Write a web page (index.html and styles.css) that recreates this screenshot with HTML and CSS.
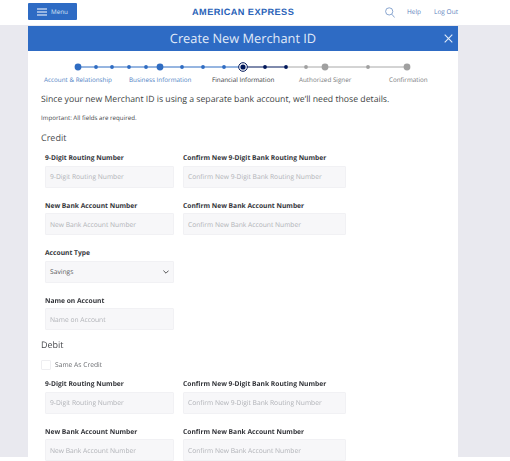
FILE: index.html
```html
<!DOCTYPE html>
<html lang="en">
<head>
<meta charset="utf-8">
<title>Create New Merchant ID</title>
<link rel="stylesheet" href="styles.css">
</head>
<body>
<header class="topbar">
  <button class="menu-btn" type="button">
    <svg class="menu-icon" width="10" height="8" viewBox="0 0 10 8"><path d="M0 1h10M0 4h10M0 7h10" stroke="#fff" stroke-width="1.2"/></svg>
    <span>Menu</span>
  </button>
  <div class="logo">AMERICAN EXPRESS</div>
  <nav class="top-links">
    <svg class="search-icon" width="10" height="11" viewBox="0 0 10 11"><circle cx="4.2" cy="4.4" r="3.6" fill="none" stroke="#6d90c4" stroke-width="0.8"/><path d="M6.8 7.2l2.8 3.3" stroke="#6d90c4" stroke-width="0.8"/></svg>
    <a class="help">Help</a>
    <a>Log Out</a>
  </nav>
</header>
<div class="page">
  <main class="panel">
    <div class="title-bar">
      <h1>Create New Merchant ID</h1>
      <svg class="close-icon" width="9" height="9" viewBox="0 0 9 9"><path d="M.7.7l7.6 7.6M8.3.7L.7 8.3" stroke="#e3edf9" stroke-width="1.1"/></svg>
    </div>
    <svg class="stepper" width="430" height="14" viewBox="0 0 430 14">
      <path d="M50 7H215" stroke="#2f6cc2" stroke-width="1"/>
      <path d="M215 7H258" stroke="#00175a" stroke-width="1"/>
      <path d="M258 7H379" stroke="#a8a8a8" stroke-width="1"/>
      <g fill="#2f6cc2">
        <circle cx="50" cy="7" r="3.4"/><circle cx="68" cy="7" r="1.9"/><circle cx="84" cy="7" r="1.9"/><circle cx="101" cy="7" r="1.9"/><circle cx="118" cy="7" r="1.9"/><circle cx="132" cy="7" r="3.4"/><circle cx="154" cy="7" r="1.9"/><circle cx="175" cy="7" r="1.9"/><circle cx="196" cy="7" r="1.9"/>
      </g>
      <circle cx="215" cy="7" r="4.3" fill="#fff" stroke="#00175a" stroke-width="1"/>
      <circle cx="215" cy="7" r="2.6" fill="#00175a"/>
      <g fill="#00175a"><circle cx="237" cy="7" r="1.9"/><circle cx="258" cy="7" r="1.9"/></g>
      <g fill="#a0a0a0"><circle cx="278" cy="7" r="1.9"/><circle cx="297" cy="7" r="3.4"/><circle cx="340" cy="7" r="1.9"/><circle cx="379" cy="7" r="3.4"/></g>
    </svg>
    <ol class="step-labels">
      <li class="done l1">Account &amp; Relationship</li>
      <li class="done l2">Business Information</li>
      <li class="current l3">Financial Information</li>
      <li class="l4">Authorized Signer</li>
      <li class="l5">Confirmation</li>
    </ol>
    <div class="content">
      <p class="lead">Since your new Merchant ID is using a separate bank account, we’ll need those details.</p>
      <p class="note">Important: All fields are required.</p>
      <h2>Credit</h2>
      <div class="grid">
        <div class="field"><label>9-Digit Routing Number</label><div class="input">9-Digit Routing Number</div></div>
        <div class="field"><label>Confirm New 9-Digit Bank Routing Number</label><div class="input">Confirm New 9-Digit Bank Routing Number</div></div>
        <div class="field"><label>New Bank Account Number</label><div class="input">New Bank Account Number</div></div>
        <div class="field"><label>Confirm New Bank Account Number</label><div class="input">Confirm New Bank Account Number</div></div>
        <div class="field first"><label>Account Type</label><div class="input select"><span>Savings</span><svg width="6" height="4" viewBox="0 0 6 4"><path d="M.4.6L3 3.2 5.6.6" fill="none" stroke="#444" stroke-width="0.9"/></svg></div></div>
        <div class="field first"><label>Name on Account</label><div class="input">Name on Account</div></div>
      </div>
      <h2>Debit</h2>
      <div class="check"><span class="box"></span><span>Same As Credit</span></div>
      <div class="grid debit-grid">
        <div class="field"><label>9-Digit Routing Number</label><div class="input">9-Digit Routing Number</div></div>
        <div class="field"><label>Confirm New 9-Digit Bank Routing Number</label><div class="input">Confirm New 9-Digit Bank Routing Number</div></div>
        <div class="field"><label>New Bank Account Number</label><div class="input">New Bank Account Number</div></div>
        <div class="field"><label>Confirm New Bank Account Number</label><div class="input">Confirm New Bank Account Number</div></div>
      </div>
    </div>
  </main>
</div>
</body>
</html>
```
FILE: styles.css
```css
* { box-sizing: border-box; }
html, body { margin: 0; height: 100%; overflow: hidden; }
body { background: #fff; font-family: "Open Sans", "Liberation Sans", sans-serif; color: #3d3f42; text-rendering: geometricPrecision; filter: blur(0.3px); }

.topbar { height: 25px; background: #fff; display: flex; align-items: flex-start; padding-left: 28px; }
.menu-btn { width: 49px; height: 17px; margin-top: 3px; background: #2e6bc4; border: 0; border-radius: 1px; color: #d5e3f5; display: flex; align-items: center; gap: 4px; padding: 0 0 0 9px; font: 6.3px "Open Sans", sans-serif; text-rendering: geometricPrecision; }
.logo { margin-left: 115px; margin-top: 6px; width: 103px; font: 700 9.2px/12px "Liberation Sans", sans-serif; letter-spacing: 0.42px; color: #2a63b8; white-space: nowrap; }
.top-links { margin-left: 90px; margin-top: 6px; display: flex; align-items: center; font-size: 6.5px; line-height: 12px; color: #5b82bd; }
.help { margin-left: 12px; margin-right: 13px; }

.page { background: #e9e9ef; height: 432px; padding: 1px 52px 0 28px; }
.panel { background: #fff; height: 435px; }
.title-bar { height: 25px; background: #2e6bc4; display: flex; align-items: center; justify-content: center; position: relative; }
.title-bar h1 { margin: 0; font-size: 12.8px; font-weight: 400; color: #e0eaf8; line-height: 25px; }
.close-icon { position: absolute; right: 5px; top: 8px; }

.stepper { display: block; margin-top: 9px; }
.step-labels { list-style: none; margin: 1px 0 0; padding: 0; display: flex; font-size: 6.3px; line-height: 10px; color: #77797c; white-space: nowrap; }
.step-labels .done { color: #4f7fc4; }
.step-labels .current { color: #33353a; }
.l1 { margin-left: 16px; width: 85px; }
.l2 { width: 83px; }
.l3 { width: 87px; }
.l4 { width: 90px; }

.content { padding: 7px 0 0 13px; }
.lead { margin: 0; font-size: 8.7px; line-height: 14px; color: #3d3f42; white-space: nowrap; }
.note { margin: 7px 0 0; font-size: 6.2px; line-height: 10px; color: #44464a; }
h2 { margin: 8px 0 0; font-size: 9px; font-weight: 400; line-height: 14px; color: #4a4c50; }
.grid { display: grid; grid-template-columns: 129px 163px; column-gap: 9px; row-gap: 13px; margin: 8px 0 0 4px; }
.debit-grid { margin-top: 9px; }
.first { grid-column: 1; }
.field label { display: block; font-size: 6.7px; font-weight: 700; line-height: 10px; color: #33353a; white-space: nowrap; }
.input { margin-top: 2.5px; height: 22px; background: #f7f7f9; border: 1px solid #f1f1f4; border-radius: 1px; padding: 0 4px; display: flex; align-items: center; font-size: 6.7px; color: #b0b2b7; white-space: nowrap; }
.select { justify-content: space-between; color: #5a5c60; }
.check { display: flex; align-items: center; gap: 4px; margin-top: 8px; font-size: 6.7px; line-height: 10px; color: #6a6c70; }
.box { width: 10px; height: 10px; border: 1px solid #eeeef1; border-radius: 1px; background: #fff; }
```
